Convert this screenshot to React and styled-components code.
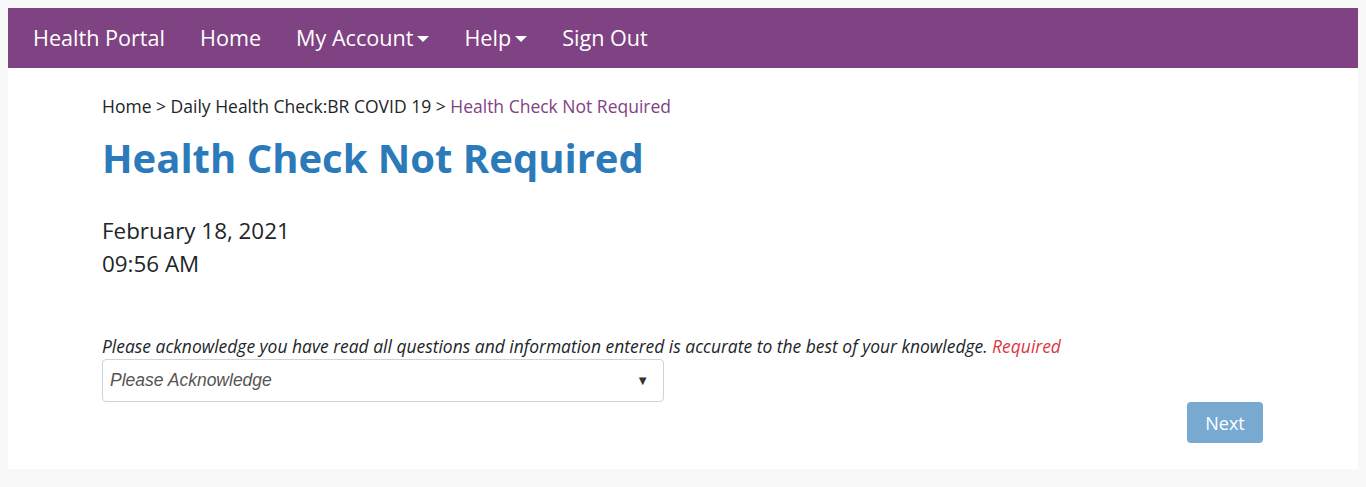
import styled, { createGlobalStyle } from "styled-components";

const GlobalStyle = createGlobalStyle`
  body {
    margin: 8px;
    background: #f8f8f8;
    font-family: "Open Sans", "Noto Sans", sans-serif;
    color: #212529;
  }
  * { box-sizing: border-box; }
`;

const App = () => {
  return (
    <>
      <GlobalStyle />
      <Page>
        <NavBar>
          <Brand>Health Portal</Brand>
          <NavItem>Home</NavItem>
          <NavItem>
            My Account <Caret />
          </NavItem>
          <NavItem>
            Help <Caret />
          </NavItem>
          <NavItem>Sign Out</NavItem>
        </NavBar>
        <Content>
          <Breadcrumb>
            <span>Home</span> &gt; <span>Daily Health Check:BR COVID 19</span> &gt;{" "}
            <Current>Health Check Not Required</Current>
          </Breadcrumb>
          <Title>Health Check Not Required</Title>
          <DateBlock>
            <div>February 18, 2021</div>
            <div>09:56 AM</div>
          </DateBlock>
          <Label>
            Please acknowledge you have read all questions and information entered is accurate to the best of your knowledge.{" "}
            <Required>Required</Required>
          </Label>
          <Select>
            <span>Please Acknowledge</span>
            <Arrow>▼</Arrow>
          </Select>
          <Actions>
            <NextButton>Next</NextButton>
          </Actions>
        </Content>
      </Page>
    </>
  );
};

export default App;

const Page = styled.div`
  width: 1350px;
  background: #ffffff;
`;

const NavBar = styled.nav`
  height: 60px;
  background: #7f4282;
  display: flex;
  align-items: center;
  padding-left: 25px;
  gap: 35px;
`;

const Brand = styled.div`
  color: #fff;
  font-size: 21.6px;
  line-height: 30px;
`;

const NavItem = styled.div`
  color: #fff;
  font-size: 21.6px;
  line-height: 30px;
  display: flex;
  align-items: center;
  gap: 4px;
`;

const Caret = styled.span`
  display: inline-block;
  width: 0;
  height: 0;
  border-left: 6.5px solid transparent;
  border-right: 6.5px solid transparent;
  border-top: 6.5px solid #fff;
  margin-top: 1px;
`;

const Content = styled.main`
  padding: 26px 95px 26px 94px;
`;

const Breadcrumb = styled.div`
  font-size: 17.5px;
  line-height: 24px;
  color: #212529;
`;

const Current = styled.span`
  color: #7f4282;
`;

const Title = styled.h1`
  margin: 16px 0 0;
  font-size: 40px;
  line-height: 48px;
  font-weight: 700;
  color: #2b7bba;
`;

const DateBlock = styled.div`
  margin-top: 32px;
  font-size: 22.4px;
  line-height: 33px;
  color: #212529;
`;

const Label = styled.div`
  margin-top: 54px;
  font-size: 17.45px;
  line-height: 24px;
  font-style: italic;
  color: #212529;
`;

const Required = styled.span`
  color: #dc3545;
`;

const Select = styled.div`
  margin-top: 1px;
  width: 562px;
  height: 43px;
  border: 1px solid #ced4da;
  border-radius: 4px;
  display: flex;
  align-items: center;
  justify-content: space-between;
  padding: 0 14px 0 7px;
  font-family: "Liberation Sans", Arial, sans-serif;
  font-style: italic;
  font-size: 17.5px;
  color: #555;
`;

const Arrow = styled.span`
  font-style: normal;
  font-size: 13px;
  color: #333;
`;

const Actions = styled.div`
  display: flex;
  justify-content: flex-end;
`;

const NextButton = styled.button`
  width: 76px;
  height: 41px;
  border: none;
  border-radius: 4px;
  background: #77a9d1;
  color: #fff;
  font-family: "Open Sans", sans-serif;
  font-size: 18px;
`;
